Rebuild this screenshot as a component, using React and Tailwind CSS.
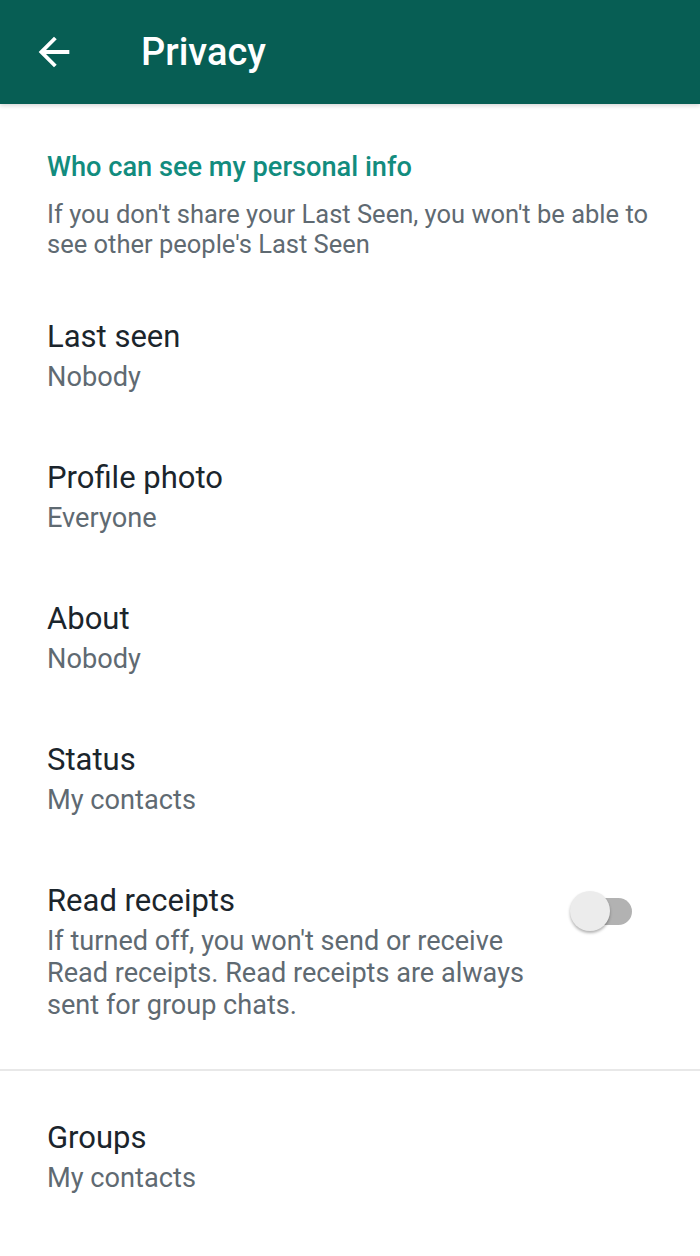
import React from "react";

function Row({ title, sub }) {
  return (
    <div className="flex items-start pl-[47px] pr-[68px] pt-[30px] pb-[31px]">
      <div className="flex-1">
        <div className="text-[31px] leading-[48px] text-[#1b252c]">{title}</div>
        <div className="text-[27.2px] leading-[32px] text-[#5f6a72]">{sub}</div>
      </div>
    </div>
  );
}

export default function App() {
  return (
    <div className="w-[700px] h-[1256px] bg-white overflow-hidden" style={{ fontFamily: "Roboto, 'Noto Sans', sans-serif" }}>
      <div className="h-[104px] bg-[#075e54] flex items-center shadow-[0_2px_4px_rgba(0,0,0,0.15)] relative z-10">
        <svg className="ml-[31px]" width="46" height="46" viewBox="0 0 24 24" fill="#ffffff">
          <path d="M20 11H7.83l5.59-5.59L12 4l-8 8 8 8 1.41-1.41L7.83 13H20v-2z" />
        </svg>
        <div className="ml-[64px] text-[38px] font-medium text-white leading-none">Privacy</div>
      </div>
      <div className="pl-[47px] pr-[30px] pt-[45px]">
        <div className="text-[27.2px] leading-[36px] font-medium text-[#128c7e]">Who can see my personal info</div>
        <div className="mt-[14px] text-[25.5px] leading-[30px] text-[#5f6a72] w-[612px]">
          If you don't share your Last Seen, you won't be able to see other people's Last Seen
        </div>
      </div>
      <div className="mt-[24px]">
        <Row title="Last seen" sub="Nobody" />
        <Row title="Profile photo" sub="Everyone" />
        <Row title="About" sub="Nobody" />
        <Row title="Status" sub="My contacts" />
        <div className="flex items-start pl-[47px] pr-[68px] pt-[30px] pb-[48px]">
          <div className="w-[500px]">
            <div className="text-[31px] leading-[48px] text-[#1b252c]">Read receipts</div>
            <div className="text-[27.1px] leading-[32px] text-[#5f6a72]">
              If turned off, you won't send or receive Read receipts. Read receipts are always sent for group chats.
            </div>
          </div>
          <div className="flex-1" />
          <div className="relative w-[62px] h-[40px] mt-[14px] flex items-center shrink-0">
            <div className="absolute left-[6px] right-0 h-[27px] rounded-full bg-[#b2b2b2]" />
            <div className="absolute left-0 w-[40px] h-[40px] rounded-full bg-[#ececec] shadow-[0_2px_3px_rgba(0,0,0,0.3)]" />
          </div>
        </div>
        <div className="h-[2px] bg-[#e8e8e8]" />
        <div className="flex items-start pl-[47px] pr-[68px] pt-[43px] pb-[31px]">
          <div className="flex-1">
            <div className="text-[31px] leading-[48px] text-[#1b252c]">Groups</div>
            <div className="text-[27.2px] leading-[32px] text-[#5f6a72]">My contacts</div>
          </div>
        </div>
      </div>
    </div>
  );
}
